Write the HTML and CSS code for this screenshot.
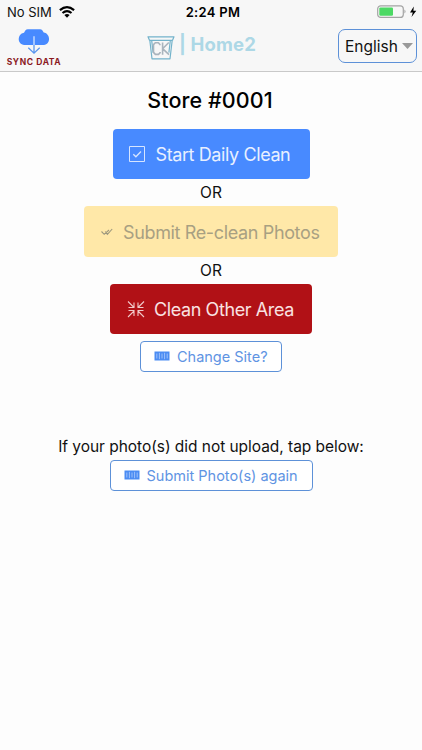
FILE: index.html
```html
<!DOCTYPE html>
<html lang="en">
<head>
<meta charset="utf-8">
<title>Home2</title>
<link rel="stylesheet" href="styles.css">
</head>
<body>
<header class="header">
  <div class="status">
    <div class="carrier"><span>No SIM</span>
      <svg width="16" height="12" viewBox="0 0 16 12" fill="none" stroke="#000" stroke-width="2.2"><path d="M.9 4.2Q8-1.8 15.1 4.2M3.5 7Q8 3.3 12.5 7"/><path d="M5.4 9Q8 6.9 10.6 9L8 11.7Z" fill="#000" stroke="none"/></svg>
    </div>
    <div class="time">2:24 PM</div>
    <div class="power">
      <svg width="40" height="14" viewBox="0 0 40 14"><rect x=".7" y=".8" width="25.6" height="11.6" rx="3" fill="none" stroke="#a4a4a4" stroke-width="1.2"/><rect x="2.3" y="2.4" width="13.7" height="8.4" rx="1.2" fill="#4cd964"/><path d="M27.5 4.5q2 2 0 4z" fill="#999"/><path d="M36.8 1.5L33 7.4h2.8L34.5 12l4.8-6.2h-2.9z" fill="#000"/></svg>
    </div>
  </div>
  <div class="toolbar">
    <div class="sync">
      <svg width="32" height="26" viewBox="0 0 32 26"><path d="M7.3 1.6Q8.4.3 9.9.3h12.2q1.4 0 2.2 1l1.4 2.3c7.4 1.3 6.8 12 .2 12.3H6.3C-.8 15.6-1.4 5.2 6 3.8z" fill="#488aff"/><path d="M16 7.2v8.7" stroke="#d5e5ff" stroke-width="1.3"/><path d="M16 15.9V24M10.3 18.8l5.7 5.4 5.7-5.4" fill="none" stroke="#5996ef" stroke-width="1.3"/></svg>
      <span>SYNC DATA</span>
    </div>
    <div class="brand">
      <svg width="28" height="24" viewBox="0 0 28 24" fill="none" stroke="#73b3cb" stroke-width="1.2" stroke-linejoin="round"><path d="M1 .8h26l-1.5 3.5H2.5zM2.8 4.3L5 22.8h18l2.2-18.5M4.7 4.6l1.4 12M23.3 4.6l-1.4 12"/><path d="M12.9 9.2V8.5l-1.5-1.7H8.3L6.5 8.6v7.8l1.9 2h3.1l1.6-1.7V16M15.6 6.4v12.4M21.8 6.5l-6.2 6.2 6.4 6" stroke="#a9b4bd" stroke-width="1.6"/></svg>
      <span>| Home2</span>
    </div>
    <div class="language"><span>English</span><svg width="11" height="6" viewBox="0 0 11 6"><path d="M0 0h11L5.5 6z" fill="#999"/></svg></div>
  </div>
</header>
<main class="main">
  <h1 class="store">Store #0001</h1>
  <div class="button daily">
    <svg width="18" height="18" viewBox="0 0 18 18" fill="none" stroke="#d6e5ff"><path d="M1.5.5h15v15h-15z"/><path d="M5.3 8.2l2.6 2.6L13 5.5" stroke-width="1.3"/></svg>
    <span>Start Daily Clean</span>
  </div>
  <div class="or">OR</div>
  <div class="button reclean">
    <svg width="12" height="9" viewBox="0 0 12 9" fill="none" stroke="#9d987e" stroke-width="1.1"><path d="M.5 3.5l2.7 2.8L8 2M4.2 3.5l2.2 2.8L11.2 1"/></svg>
    <span>Submit Re-clean Photos</span>
  </div>
  <div class="or">OR</div>
  <div class="button other">
    <svg width="18" height="18" viewBox="0 0 18 18" fill="none" stroke="#f1c9c9" stroke-width="1.1"><path d="M1 .5l6 6M1.5 6.5h5.5V1.5M17 .5l-6 6M11 1.5v5h5.5M1 16l6-6M1.5 9.5h5.5V15M17 16l-6-6M11 15V9.5h5.5"/></svg>
    <span>Clean Other Area</span>
  </div>
  <div class="outline change">
    <svg width="16" height="10" viewBox="0 0 16 10"><path d="M.5.5h15v9H.5z" fill="#4b8cf3"/><path d="M2.8 2.5v5M5.4 1.8v6.4M8 2.5v5M10.6 1.8v6.4M13.2 2.5v5" stroke="#a6c6fa" stroke-width=".9"/></svg>
    <span>Change Site?</span>
  </div>
  <p class="hint">If your photo(s) did not upload, tap below:</p>
  <div class="outline again">
    <svg width="16" height="10" viewBox="0 0 16 10"><path d="M.5.5h15v9H.5z" fill="#4b8cf3"/><path d="M2.8 2.5v5M5.4 1.8v6.4M8 2.5v5M10.6 1.8v6.4M13.2 2.5v5" stroke="#a6c6fa" stroke-width=".9"/></svg>
    <span>Submit Photo(s) again</span>
  </div>
</main>
</body>
</html>
```
FILE: styles.css
```css
* { box-sizing: border-box; }
body { margin: 0; height: 750px; overflow: hidden; background: #fdfdfd; color: #111; font-family: Inter, "Liberation Sans", sans-serif; white-space: nowrap; }
svg { display: block; flex: none; }
.header { height: 72px; background: #f7f7f7; border-bottom: 1px solid #c9c9c9; }
.status { height: 24px; display: grid; grid-template-columns: 1fr auto 1fr; align-items: center; padding: 0 5px 0 7px; font-size: 13px; line-height: 16px; }
.carrier { display: flex; align-items: center; gap: 7px; }
.time { font-weight: 600; color: #000; letter-spacing: .3px; padding-left: 2px; }
.power { justify-self: end; }
.toolbar { height: 47px; display: grid; grid-template-columns: 140px auto 1fr; padding: 0 5px 0 7px; }
.sync { width: 54px; display: flex; flex-direction: column; align-items: center; padding-top: 5px; color: #8b1a1f; font-size: 8.5px; line-height: 10px; font-weight: 700; letter-spacing: .6px; }
.sync span { margin-top: 2px; }
.brand { display: flex; gap: 4px; padding-top: 12px; color: #add8e6; font-size: 18.5px; line-height: 18px; font-weight: 700; }
.brand span { margin-top: -1px; letter-spacing: .15px; }
.language { justify-self: end; margin-top: 5px; width: 79px; height: 34px; border: 1.5px solid #5d91d8; border-radius: 7px; display: flex; align-items: center; justify-content: space-between; padding: 0 3px 0 6px; font-size: 15.5px; }
.main { display: flex; flex-direction: column; align-items: center; }
.store { margin: 16px 0 0; padding-right: 2px; height: 25px; line-height: 25px; font-size: 21.5px; font-weight: 500; letter-spacing: .08px; color: #000; }
.button { height: 50.5px; border-radius: 4px; display: flex; align-items: center; padding-top: 2px; font-size: 18px; letter-spacing: -.4px; }
.daily { margin-top: 15.7px; width: 197px; padding-left: 15px; gap: 10px; background: #488aff; color: #e8f0ff; }
.or { height: 27px; line-height: 27px; font-size: 15.5px; }
.reclean { width: 254px; padding-left: 17px; gap: 10px; background: #ffe8a8; color: #a8a082; letter-spacing: -.36px; }
.other { width: 202px; padding-left: 17px; gap: 9px; background: #b11116; color: #f9e1e1; }
.outline { height: 31px; border: 1.5px solid #5d91d8; border-radius: 4px; display: flex; align-items: center; gap: 7px; padding-left: 13px; background: #fff; color: #5f94e3; font-size: 14.5px; }
.change { margin-top: 6.4px; width: 142px; }
.hint { margin: 64px 0 0; height: 24px; line-height: 21px; font-size: 15.5px; letter-spacing: -.04px; }
.again { width: 203px; }
```
